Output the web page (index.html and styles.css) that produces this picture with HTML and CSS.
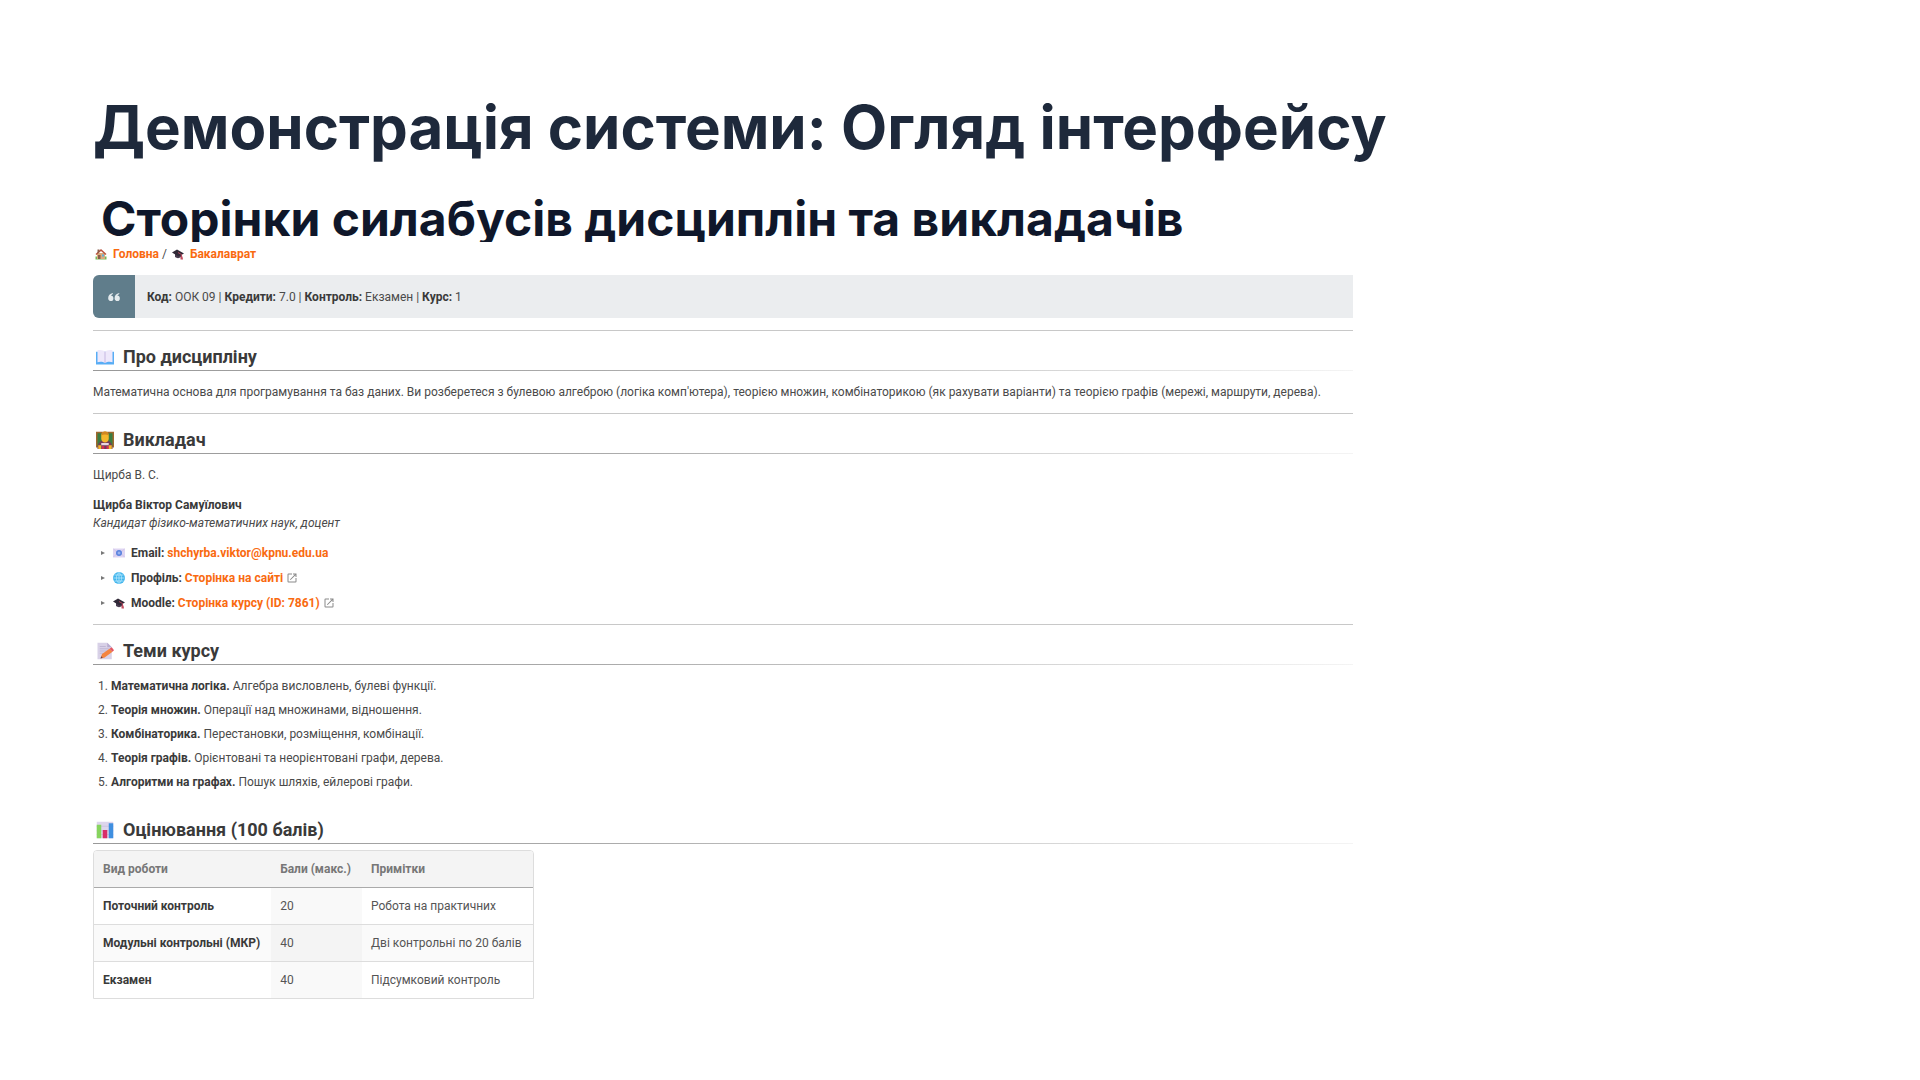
FILE: index.html
```
<!DOCTYPE html>
<html lang="uk">
<head>
  <meta charset="UTF-8">
  <meta name="viewport" content="width=device-width, initial-scale=1">
  <title>Демонстрація системи: Огляд інтерфейсу</title>
  <link rel="stylesheet" href="styles.css">
</head>
<body>
  <svg class="sprite" aria-hidden="true">
    <symbol id="i-home" viewBox="0 0 24 24">
      <path fill="#75b85a" d="M1 17h22v6H1z"/>
      <path fill="#d9ab7c" d="M4 10h16v12H4z"/>
      <path fill="#b9533f" d="M12 2 1 12l2 2 9-8 9 8 2-2z"/>
      <path fill="#8a5d4b" d="M5 3h4v5L5 11zM6 14h5v8H6z"/>
      <path fill="#5caee0" d="M14 13h4v4h-4z"/>
    </symbol>
    <symbol id="i-cap" viewBox="0 0 24 24">
      <path fill="#493c50" d="M6 11v7c3 3 9 3 12 0v-7z"/>
      <path fill="#302937" d="M10 3 0 9l13 8 11-6z"/>
      <path fill="none" stroke="#b4485c" stroke-width="2" d="m12 9 7 4v7"/>
      <path fill="#c54f61" d="M17 17h4l1 6h-5z"/>
    </symbol>
    <symbol id="i-book" viewBox="0 0 24 24">
      <path fill="#58adf5" d="M0 5h24v17H0z"/>
      <path fill="#eee8fb" d="M2 3c4-1 8 0 10 2v15c-3-2-7-2-10-1zM22 3c-4-1-8 0-10 2v15c3-2 7-2 10-1z"/>
      <path fill="none" stroke="#b9a9db" d="M12 5v15"/>
    </symbol>
    <symbol id="i-teacher" viewBox="0 0 24 24">
      <path fill="#397d42" stroke="#a0682f" stroke-width="2" d="M1 2h22v19H1z"/>
      <path fill="#733c58" d="M2 24c0-8 4-12 10-12s10 4 10 12z"/>
      <path fill="#f4b72c" d="M7 6c0-7 10-7 10 0v4c0 7-10 7-10 0z"/>
      <path fill="#d18721" d="M7 6c0-7 10-7 10 0-3-2-7-2-10 0z"/>
      <path fill="#e8d5e2" d="M7 16h10v3H7z"/>
      <path fill="#d52d53" d="M8 20h3v4H8zM14 20h3v4h-3z"/>
      <path fill="#f4b72c" d="M3 19h4v5H3zM17 19h4v5h-4z"/>
    </symbol>
    <symbol id="i-mail" viewBox="0 0 24 24">
      <path fill="#ded5f2" d="M0 3h24v18H0z"/>
      <path fill="none" stroke="#c2b4df" d="m1 20 8-8m14 8-8-8M1 4l8 7m14-7-8 7"/>
      <circle cx="12" cy="12" r="6" fill="#5a83df"/>
      <circle cx="12" cy="12" r="2" fill="none" stroke="#e9efff"/>
    </symbol>
    <symbol id="i-globe" viewBox="0 0 24 24">
      <circle cx="12" cy="12" r="12" fill="#42b5ec"/>
      <path fill="none" stroke="#b7e8fd" stroke-width="1.5" d="M1 12h22M12 1v22M3 6h18M3 18h18M12 1c-7 6-7 16 0 22 7-6 7-16 0-22"/>
    </symbol>
    <symbol id="i-memo" viewBox="0 0 24 24">
      <path fill="#d8d1e7" d="M2 1h13l6 6v16H2z"/>
      <path fill="#b8acd0" d="M15 1v6h6z"/>
      <path fill="none" stroke="#b8adcf" d="M5 6h8M5 9h12M5 12h10M5 15h5"/>
      <path fill="#f48440" d="m6 22 2-6L18 9l4 4-11 8z"/>
      <path fill="#e45662" d="m18 9 3-2 3 4-2 2z"/>
      <path fill="#5c4250" d="m6 22 1-3 2 2z"/>
    </symbol>
    <symbol id="i-chart" viewBox="0 0 24 24">
      <path fill="#ddd5ec" d="M1 1h22v22H1z"/>
      <path stroke="#c7bcdc" d="M1 7h22M1 13h22M1 18h22"/>
      <path fill="#87d45e" d="M1 5h6v18H1z"/>
      <path fill="#d82d69" d="M9 12h6v11H9z"/>
      <path fill="#3f8fe0" d="M17 3h6v20h-6z"/>
    </symbol>
    <symbol id="i-quote" viewBox="0 0 24 24">
      <path d="M10 5C5 6 2 9 2 14c0 3 2 5 5 5s4-2 4-5-2-4-4-4c0-1 1-2 3-3zM21 5c-5 1-8 4-8 9 0 3 2 5 5 5s4-2 4-5-2-4-4-4c0-1 1-2 3-3z"/>
    </symbol>
    <symbol id="i-external" viewBox="0 0 24 24">
      <path d="M14 3v2h3.6l-9.8 9.8 1.4 1.4L19 6.4V10h2V3m-2 16H5V5h7V3H5a2 2 0 0 0-2 2v14a2 2 0 0 0 2 2h14a2 2 0 0 0 2-2v-7h-2z"/>
    </symbol>
  </svg>

  <main class="slide">
    <h1 class="slide-title">Демонстрація системи: Огляд інтерфейсу</h1>
    <p class="slide-subtitle">Сторінки силабусів дисциплін та викладачів</p>

    <article class="syllabus">
      <nav class="breadcrumb">
        <svg class="emoji"><use href="#i-home"/></svg><a href="#">Головна</a> /
        <svg class="emoji"><use href="#i-cap"/></svg><a href="#">Бакалаврат</a>
      </nav>

      <div class="quote">
        <div class="quote-icon"><svg><use href="#i-quote"/></svg></div>
        <p class="quote-text"><strong>Код:</strong> ООК 09 | <strong>Кредити:</strong> 7.0 | <strong>Контроль:</strong> Екзамен | <strong>Курс:</strong> 1</p>
      </div>
      <hr>

      <h2><svg class="emoji"><use href="#i-book"/></svg>Про дисципліну</h2>
      <p>Математична основа для програмування та баз даних. Ви розберетеся з булевою алгеброю (логіка комп'ютера), теорією множин, комбінаторикою (як рахувати варіанти) та теорією графів (мережі, маршрути, дерева).</p>
      <hr>

      <h2><svg class="emoji"><use href="#i-teacher"/></svg>Викладач</h2>
      <p>Щирба В. С.</p>
      <p><strong>Щирба Віктор Самуїлович</strong><br><em>Кандидат фізико-математичних наук, доцент</em></p>
      <ul class="contacts">
        <li><svg class="emoji"><use href="#i-mail"/></svg><strong>Email:</strong> <a href="mailto:shchyrba.viktor@kpnu.edu.ua">shchyrba.viktor@kpnu.edu.ua</a></li>
        <li><svg class="emoji"><use href="#i-globe"/></svg><strong>Профіль:</strong> <a href="#">Сторінка на сайті</a> <svg class="external"><use href="#i-external"/></svg></li>
        <li><svg class="emoji"><use href="#i-cap"/></svg><strong>Moodle:</strong> <a href="#">Сторінка курсу (ID: 7861)</a> <svg class="external"><use href="#i-external"/></svg></li>
      </ul>
      <hr>

      <h2><svg class="emoji"><use href="#i-memo"/></svg>Теми курсу</h2>
      <ol class="topics">
        <li><strong>Математична логіка.</strong> Алгебра висловлень, булеві функції.</li>
        <li><strong>Теорія множин.</strong> Операції над множинами, відношення.</li>
        <li><strong>Комбінаторика.</strong> Перестановки, розміщення, комбінації.</li>
        <li><strong>Теорія графів.</strong> Орієнтовані та неорієнтовані графи, дерева.</li>
        <li><strong>Алгоритми на графах.</strong> Пошук шляхів, ейлерові графи.</li>
      </ol>

      <h2 class="grading-title"><svg class="emoji"><use href="#i-chart"/></svg>Оцінювання (100 балів)</h2>
      <table class="grading">
        <thead>
          <tr><th>Вид роботи</th><th>Бали (макс.)</th><th>Примітки</th></tr>
        </thead>
        <tbody>
          <tr><td><strong>Поточний контроль</strong></td><td>20</td><td>Робота на практичних</td></tr>
          <tr><td><strong>Модульні контрольні (МКР)</strong></td><td>40</td><td>Дві контрольні по 20 балів</td></tr>
          <tr><td><strong>Екзамен</strong></td><td>40</td><td>Підсумковий контроль</td></tr>
        </tbody>
      </table>
    </article>
  </main>
</body>
</html>
```
FILE: styles.css
```
* {
  box-sizing: border-box;
}
body {
  margin: 0;
  background: #fff;
}
.sprite {
  display: none;
}
.slide {
  padding: 91px 93px 80px;
}
.slide-title {
  margin: 0;
  font: bold 60px/72px Inter, sans-serif;
  color: #1e293b;
}
.slide-subtitle {
  margin: 32px 0 0;
  padding-left: 8px;
  overflow: hidden;
  font: bold 48px/47px Inter, sans-serif;
  color: #0f172a;
}

.syllabus {
  max-width: 1260px;
  padding-top: 3px;
  font: 12px/18px Roboto, sans-serif;
  color: #4a4a4a;
}
.syllabus p {
  margin: 12px 0;
}
.syllabus strong {
  color: #3a3a3a;
}
.syllabus a {
  color: #f96a10;
  font-weight: bold;
  text-decoration: none;
}
.syllabus hr {
  height: 1px;
  margin: 12px 0 14px;
  border: 0;
  background: #c8c8c8;
}
.syllabus h2 {
  margin: 0;
  padding-bottom: 1px;
  border-bottom: 1px solid;
  border-image: linear-gradient(90deg, #999, #aaa 40%, #f4f4f4) 1;
  font-size: 18px;
  line-height: 24px;
  color: #3a3a3a;
}
.emoji {
  width: 12px;
  height: 12px;
  margin: 0 6px 0 2px;
  vertical-align: -2px;
}
h2 .emoji {
  width: 18px;
  height: 18px;
  margin: 0 9px 0 3px;
  vertical-align: -3px;
}

.quote {
  display: flex;
  margin-top: 12px;
  border-radius: 6px 0 0 6px;
  overflow: hidden;
  background: #ebedef;
}
.quote-icon {
  display: flex;
  align-items: center;
  justify-content: center;
  width: 42px;
  background: #607d8b;
}
.quote-icon svg {
  width: 14px;
  height: 14px;
  fill: #e3eaed;
}
.syllabus .quote-text {
  margin: 0;
  padding: 13px 12px 12px;
}

.contacts,
.topics {
  display: flex;
  flex-direction: column;
  margin: 12px 0;
  padding: 0;
}
.contacts {
  gap: 7px;
  list-style: none;
}
.contacts li {
  padding-left: 18px;
}
.contacts li::before {
  content: "";
  float: left;
  margin: 7px 0 0 -10px;
  border: 2px solid transparent;
  border-left: 4px solid #777;
  border-right: 0;
}
.external {
  width: 12px;
  height: 12px;
  vertical-align: -2px;
  fill: #8a8a8a;
}
.topics {
  gap: 6px;
  padding-left: 18px;
}

.syllabus .grading-title {
  margin-top: 27px;
}
.grading {
  margin-top: 6px;
  border: 1px solid #ddd;
  border-spacing: 0;
  border-radius: 4px 4px 0 0;
  overflow: hidden;
}
.grading th,
.grading td {
  padding: 9px 11px 9px 9px;
  text-align: left;
}
.grading th {
  background: #f4f4f4;
  border-bottom: 1px solid #aaa;
  color: #777;
}
.grading td + td {
  color: #555;
}
.grading tr + tr td {
  border-top: 1px solid #ddd;
}
.grading td:nth-child(2) {
  background: #f9f9f9;
}
.grading tr:nth-child(2) td {
  background: #fafafa;
}
.grading tr:nth-child(2) td:nth-child(2) {
  background: #f4f4f4;
}
```
